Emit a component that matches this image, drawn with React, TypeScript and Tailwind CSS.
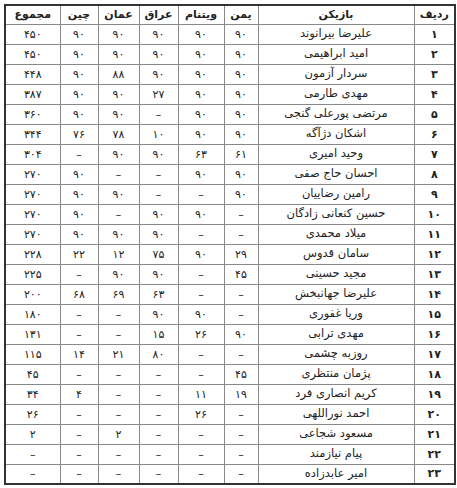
const DASH = '–'

type Row = [string, string, string, string, string, string, string, string]

// ردیف، بازیکن، یمن، ویتنام، عراق، عمان، چین، مجموع
const rows: Row[] = [
  ['۱', 'علیرضا بیرانوند', '۹۰', '۹۰', '۹۰', '۹۰', '۹۰', '۴۵۰'],
  ['۲', 'امید ابراهیمی', '۹۰', '۹۰', '۹۰', '۹۰', '۹۰', '۴۵۰'],
  ['۳', 'سردار آزمون', '۹۰', '۹۰', '۹۰', '۸۸', '۹۰', '۴۴۸'],
  ['۴', 'مهدی طارمی', '۹۰', '۹۰', '۲۷', '۹۰', '۹۰', '۳۸۷'],
  ['۵', 'مرتضی پورعلی گنجی', '۹۰', '۹۰', DASH, '۹۰', '۹۰', '۳۶۰'],
  ['۶', 'اشکان دژآگه', '۹۰', '۹۰', '۱۰', '۷۸', '۷۶', '۳۴۴'],
  ['۷', 'وحید امیری', '۶۱', '۶۳', '۹۰', '۹۰', DASH, '۳۰۴'],
  ['۸', 'احسان حاج صفی', '۹۰', '۹۰', DASH, DASH, '۹۰', '۲۷۰'],
  ['۹', 'رامین رضاییان', '۹۰', DASH, DASH, '۹۰', '۹۰', '۲۷۰'],
  ['۱۰', 'حسین کنعانی زادگان', DASH, '۹۰', '۹۰', DASH, '۹۰', '۲۷۰'],
  ['۱۱', 'میلاد محمدی', DASH, DASH, '۹۰', '۹۰', '۹۰', '۲۷۰'],
  ['۱۲', 'سامان قدوس', '۲۹', '۹۰', '۷۵', '۱۲', '۲۲', '۲۲۸'],
  ['۱۳', 'مجید حسینی', '۴۵', DASH, '۹۰', '۹۰', DASH, '۲۲۵'],
  ['۱۴', 'علیرضا جهانبخش', DASH, DASH, '۶۳', '۶۹', '۶۸', '۲۰۰'],
  ['۱۵', 'وریا غفوری', DASH, '۹۰', '۹۰', DASH, DASH, '۱۸۰'],
  ['۱۶', 'مهدی ترابی', '۹۰', '۲۶', '۱۵', DASH, DASH, '۱۳۱'],
  ['۱۷', 'روزبه چشمی', DASH, DASH, '۸۰', '۲۱', '۱۴', '۱۱۵'],
  ['۱۸', 'پژمان منتظری', '۴۵', DASH, DASH, DASH, DASH, '۴۵'],
  ['۱۹', 'کریم انصاری فرد', '۱۹', '۱۱', DASH, DASH, '۴', '۳۴'],
  ['۲۰', 'احمد نوراللهی', DASH, '۲۶', DASH, DASH, DASH, '۲۶'],
  ['۲۱', 'مسعود شجاعی', DASH, DASH, DASH, '۲', DASH, '۲'],
  ['۲۲', 'پیام نیازمند', DASH, DASH, DASH, DASH, DASH, DASH],
  ['۲۳', 'امیر عابدزاده', DASH, DASH, DASH, DASH, DASH, DASH],
]

const headers = ['ردیف', 'بازیکن', 'یمن', 'ویتنام', 'عراق', 'عمان', 'چین', 'مجموع']
const widths = ['w-[41px]', 'w-[156px]', 'w-[34px]', 'w-[46px]', 'w-[39px]', 'w-[41px]', 'w-[38px]', 'w-[55px]']

export default function App() {
  return (
    <div className="bg-white min-h-[488px] pt-[4px] pl-[4px] font-['DejaVu_Sans',sans-serif] text-[11px] text-[#222]">
      <table dir="rtl" className="table-fixed border-collapse border-2 border-[#333] w-[449px]">
        <thead>
          <tr className="h-[19px]">
            {headers.map((h, i) => (
              <th key={h} className={`${widths[i]} border border-[#888] font-bold text-center leading-none`}>
                {h}
              </th>
            ))}
          </tr>
        </thead>
        <tbody>
          {rows.map((r) => (
            <tr key={r[0]} className="h-[20px]">
              {r.map((c, i) => (
                <td
                  key={i}
                  className={`border border-[#888] text-center leading-none ${i === 0 ? 'font-bold' : ''} ${i === 1 ? 'text-[11.5px]' : ''}`}
                >
                  {c}
                </td>
              ))}
            </tr>
          ))}
        </tbody>
      </table>
    </div>
  )
}
